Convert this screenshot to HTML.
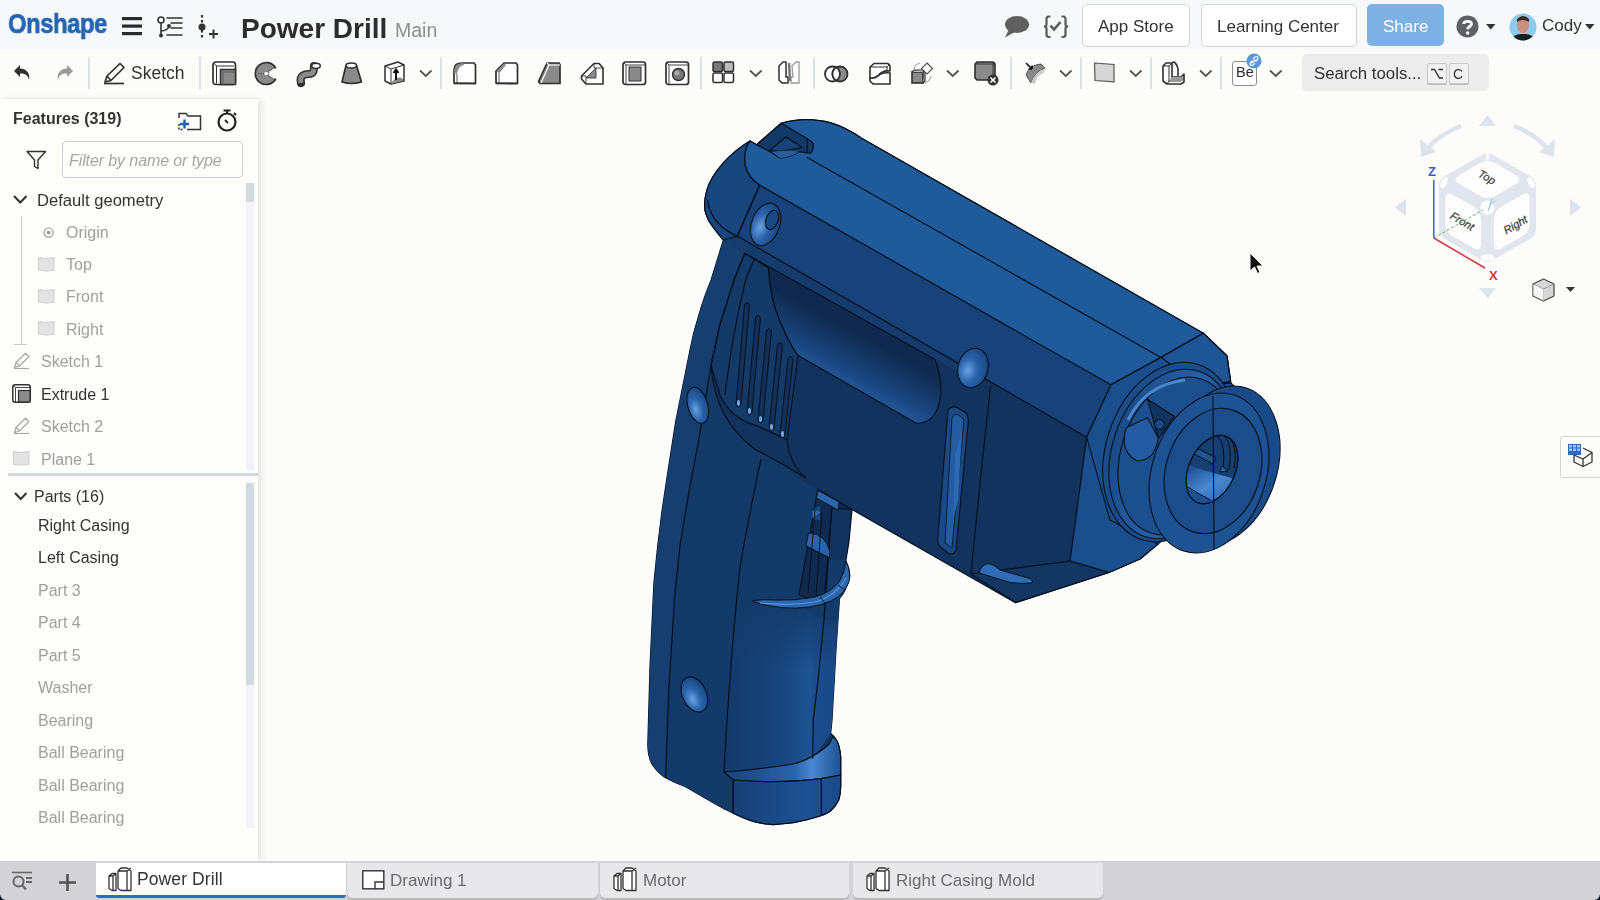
<!DOCTYPE html>
<html><head><meta charset="utf-8">
<style>
*{box-sizing:border-box;margin:0;padding:0}
html,body{width:1600px;height:900px;overflow:hidden;background:#fcfcfa;font-family:"Liberation Sans",sans-serif;color:#333;-webkit-font-smoothing:antialiased}
.a{position:absolute}
.t{position:absolute;white-space:nowrap;line-height:1;will-change:transform}
#topbar{position:absolute;left:0;top:0;width:1600px;height:50px;background:#f7f8fa}
#toolbar{position:absolute;left:0;top:50px;width:1600px;height:48px;background:#fcfcfb}
#panel{position:absolute;left:0;top:99px;width:258px;height:763px;background:#fdfdfc;box-shadow:5px 0 7px -1px rgba(20,20,60,0.09),0 -1px 2px rgba(0,0,0,0.06)}
#tabs{position:absolute;left:0;top:861px;width:1600px;height:39px;background:#d3d3d5}
.sep{position:absolute;top:57px;width:2px;height:32px;background:#dce1e6}
.btn{position:absolute;top:4px;height:43px;border:1px solid #d2d2d2;border-radius:5px;background:#fff}
.row{position:absolute;font-size:16.5px;white-space:nowrap;line-height:1}
.g{color:#a0a0a0}
.d{color:#333}
.tab{position:absolute;top:863px;height:35px;background:#e8e8ea;border-radius:0 0 5px 5px;box-shadow:0 1px 1px rgba(0,0,0,0.12)}
.tab .t{font-size:17px;color:#6b6b6b;top:11px}
svg{position:absolute;overflow:visible}
.ic{stroke:#333;stroke-width:1.6;fill:none;stroke-linejoin:round;stroke-linecap:round}
</style></head>
<body>
<svg style="left:0;top:0" width="1600" height="900" viewBox="0 0 1600 900">
<defs>
<linearGradient id="hg" x1="725" y1="0" x2="832" y2="0" gradientUnits="userSpaceOnUse">
<stop offset="0" stop-color="#143a6a"/><stop offset="0.5" stop-color="#18447c"/><stop offset="0.8" stop-color="#1e5392"/><stop offset="0.83" stop-color="#1b4d8c"/><stop offset="1" stop-color="#1a4a88"/>
</linearGradient>
<linearGradient id="hfade" x1="0" y1="600" x2="0" y2="670" gradientUnits="userSpaceOnUse">
<stop offset="0" stop-color="#143a69" stop-opacity="1"/><stop offset="1" stop-color="#143a69" stop-opacity="0"/>
</linearGradient>
<linearGradient id="og" x1="815" y1="395" x2="850" y2="330" gradientUnits="userSpaceOnUse">
<stop offset="0" stop-color="#3472bd"/><stop offset="0.5" stop-color="#1a4782"/><stop offset="1" stop-color="#0f2a4e"/>
</linearGradient>
<radialGradient id="holeg" cx="0.35" cy="0.6" r="0.7">
<stop offset="0" stop-color="#6aa2e2"/><stop offset="0.45" stop-color="#2a63aa"/><stop offset="1" stop-color="#17447c"/>
</radialGradient>
<linearGradient id="footg" x1="725" y1="0" x2="841" y2="0" gradientUnits="userSpaceOnUse">
<stop offset="0" stop-color="#163e72"/><stop offset="0.7" stop-color="#1d5192"/><stop offset="1" stop-color="#1a4a88"/>
</linearGradient>
<linearGradient id="filg" x1="725" y1="0" x2="841" y2="0" gradientUnits="userSpaceOnUse">
<stop offset="0" stop-color="#17427a"/><stop offset="0.6" stop-color="#2a64ab"/><stop offset="0.75" stop-color="#4a88d2"/><stop offset="1" stop-color="#1d5294"/>
</linearGradient>
<linearGradient id="chg" x1="1110" y1="0" x2="1240" y2="0" gradientUnits="userSpaceOnUse">
<stop offset="0" stop-color="#1a4a86"/><stop offset="0.5" stop-color="#2660a8"/><stop offset="1" stop-color="#1a4a86"/>
</linearGradient>
<linearGradient id="chole" x1="1190" y1="500" x2="1235" y2="440" gradientUnits="userSpaceOnUse">
<stop offset="0" stop-color="#1f5598"/><stop offset="0.4" stop-color="#4a88d0"/><stop offset="1" stop-color="#13386a"/>
</linearGradient>
<clipPath id="sil"><path d="M750 141 Q735 150 723.3 162.8 Q710 178 706.7 190.6 Q703 205 705.7 213.3 Q708 221 712.8 226.7 Q718 234 723.4 240 L711.1 280 Q703 300 698.7 315.6 Q693 333 689.8 351 L682.7 386.7 L675.6 422.2 L667.3 475.6 L662 511 L657.6 546.7 L654 582 L653.1 600 L650 666.7 L647.8 744.4 Q648 757 652.2 764.4 Q658 773 665.6 777.8 Q675 783 685.6 786.7 L713.3 802.7 Q724 809 733.3 813.3 Q745 819 753.3 821.3 Q763 824 773.3 824.7 L793.3 822.7 Q808 820 820 816 Q828 813 830.7 810.7 Q836 806 838.7 800 Q840.5 794 840.7 786.7 L840.7 757.3 Q840 750 838.7 745.3 Q836 740 833.3 736 L830.7 733.3 L832 720 L836 649.4 L838 620 L839.5 598.2 Q846 592 849.6 576.4 Q850 570 845.8 560.9 L848.9 542.2 L852 509.5 L1015.5 602.8 L1109 572.5 L1140 559 L1158 544 L1170 520 L1190 440 L1231 383 L1227 356 L1203.3 333.3 L862 138.5 Q845 127 830 122.7 Q820 120 806.7 119.7 Q795 119.5 781.3 123.3 L756.7 144.7 L750 141 Z"/></clipPath>
<linearGradient id="chole2" x1="1190" y1="470" x2="1215" y2="510" gradientUnits="userSpaceOnUse">
<stop offset="0" stop-color="#1f5598"/><stop offset="0.5" stop-color="#4a88d0"/><stop offset="1" stop-color="#2a64ad"/>
</linearGradient>
</defs>
<g stroke="#06101f" stroke-width="1.2" stroke-linejoin="round">
<!-- whole silhouette base -->
<path d="M750 141 Q735 150 723.3 162.8 Q710 178 706.7 190.6 Q703 205 705.7 213.3 Q708 221 712.8 226.7 Q718 234 723.4 240 L711.1 280 Q703 300 698.7 315.6 Q693 333 689.8 351 L682.7 386.7 L675.6 422.2 L667.3 475.6 L662 511 L657.6 546.7 L654 582 L653.1 600 L650 666.7 L647.8 744.4 Q648 757 652.2 764.4 Q658 773 665.6 777.8 Q675 783 685.6 786.7 L713.3 802.7 Q724 809 733.3 813.3 Q745 819 753.3 821.3 Q763 824 773.3 824.7 L793.3 822.7 Q808 820 820 816 Q828 813 830.7 810.7 Q836 806 838.7 800 Q840.5 794 840.7 786.7 L840.7 757.3 Q840 750 838.7 745.3 Q836 740 833.3 736 L830.7 733.3 L832 720 L836 649.4 L838 620 L839.5 598.2 Q846 592 849.6 576.4 Q850 570 845.8 560.9 L848.9 542.2 L852 509.5 L1015.5 602.8 L1109 572.5 L1140 559 L1158 544 L1170 520 L1190 440 L1231 383 L1227 356 L1203.3 333.3 L862 138.5 Q845 127 830 122.7 Q820 120 806.7 119.7 Q795 119.5 781.3 123.3 L756.7 144.7 L750 141 Z" fill="#12335d"/>
<!-- handle left strip -->
<path d="M723.4 240 L711.1 280 Q703 300 698.7 315.6 Q693 333 689.8 351 L682.7 386.7 L675.6 422.2 L667.3 475.6 L662 511 L657.6 546.7 L654 582 L653.1 600 L650 666.7 L647.8 744.4 Q648 757 652.2 764.4 Q658 773 665.6 777.8 L668.9 688.9 L674.4 600 L679.8 546.7 L688.7 493.3 L698.7 440 L711 365.3 L720 324.4 L734 280 L744.8 253.3 Z" fill="#163e6f" stroke="none"/>
<!-- handle middle -->
<path d="M711 365.3 L698.7 440 L688.7 493.3 L679.8 546.7 L674.4 600 L668.9 688.9 L665.6 777.8 Q675 783 685.6 786.7 L713.3 802.7 Q724 809 733.3 813.3 L733.3 780 L812.7 758.7 L830.7 733.3 L832 720 L836 649.4 L838 620 L839.5 598.2 L824 604 L831.8 508 L852 509.5 L806 483 Q780 462 754.8 449.2 Q715 420 711 365.3 Z" fill="#143a69" stroke="none"/>
<!-- band -->
<path d="M759.4 185 L1111 384.8 L1086.7 437.3 L900 329.3 L737.3 236 Q728 233 720 224 Z" fill="#17437a" stroke="none"/>
<!-- strip -->
<path d="M737.3 236 L900 329.3 L960 364 L960 373 L900 340 L744.8 253.3 L723.4 240 Z" fill="#153c6c" stroke="none"/>
<!-- top face -->
<path d="M750 141 L756.7 144.7 L781.3 123.3 Q795 119.5 806.7 119.7 Q820 120 830 122.7 Q845 127 862 138.5 L1203.3 333.3 L1161 357.4 L1111 384.8 L759.4 185 Q748 178 745 165 Q743 150 750 141 Z" fill="#1f5a9b"/>
<!-- rear cap face -->
<path d="M750 141 Q735 150 723.3 162.8 Q710 178 706.7 190.6 Q703 205 705.7 213.3 Q708 221 712.8 226.7 Q718 234 723.4 240 L737.3 236 L759.4 185 Q748 178 745 165 Q743 150 750 141 Z" fill="#18477f"/>
<path d="M707.4 200 Q710 214 717.2 222 Q725 231 737.3 236" fill="none"/>
<!-- slot on cap top -->
<path d="M756.7 144.7 L781.3 123.3 L807.3 138.7 Q814 142 813.5 146.5 Q813 151 810.7 153.3 L798.7 151.7 Q790 157.5 780 158 L769.3 151.3 Z" fill="#133966"/>
<path d="M769.3 150.7 L786 136.7 L802 147.3 Q792 150 780 151 Z" fill="#17427a"/>
<path d="M772 152 Q785 149 798.7 151.7 Q790 157.5 780 158 Z" fill="#2a5c9c" stroke="none"/>
<path d="M807.3 138.7 L807 153" fill="none"/>
<!-- front face -->
<path d="M1111 384.8 L1161 357.4 L1203.3 333.3 L1227 356 L1230.4 381.5 L1185 390 L1140 420 L1120 520 L1158 544 L1140 559 L1109 572.5 L1070 561 L1086.7 437.3 Z" fill="#1b4e8c"/>
<path d="M1161 357.4 L1203.3 333.3 L1227 356 L1230.4 381.5 L1200 386 Z" fill="#1e5596"/>
<!-- bottom face -->
<path d="M971 574 L1015.5 602.5 L1109 572.5 L1070 561 Z" fill="#133762"/>
</g>
<!-- chuck -->
<g stroke="#06101f" stroke-width="1.1">
<path d="M1111 384.8 L1161 357.4 L1200 386 L1231 383 L1240 392 L1175 530 L1158 544 L1110 520 L1086.7 437.3 Z" fill="#1b4e8c"/>
<ellipse cx="1170" cy="452" rx="64" ry="92" transform="rotate(18 1170 452)" fill="#1b4d8a"/>
<ellipse cx="1172" cy="454" rx="60" ry="87" transform="rotate(18 1172 454)" fill="url(#chg)"/>
<ellipse cx="1176" cy="456" rx="55" ry="81" transform="rotate(18 1176 456)" fill="#1c4f8d"/>
<path d="M1128 420 Q1145 385 1185 380" stroke="#4a86cc" stroke-width="3" fill="none"/>
<path d="M1147.5 399.3 L1174.4 416.5 L1158.5 438.5 Z" fill="#123460"/>
<circle cx="1159.5" cy="424.5" r="5" fill="#1a4a86"/>
<path d="M1147.5 417.7 L1158.5 438.5 Q1155 452 1151 455.6 Q1143 462 1136.5 460.5 Q1126 455 1124.2 443.3 Q1124 432 1126.7 427.5 Z" fill="#245ca3"/>
<ellipse cx="1221" cy="466" rx="56" ry="82" transform="rotate(18 1221 466)" fill="#1a4b88"/>
<ellipse cx="1209" cy="473" rx="57" ry="82" transform="rotate(18 1209 473)" fill="#1d5393"/>
<ellipse cx="1213" cy="471" rx="47" ry="64" transform="rotate(18 1213 471)" fill="#1b4d8b"/>
<clipPath id="holec"><ellipse cx="1212" cy="469.5" rx="23" ry="36" transform="rotate(25 1212 469.5)"/></clipPath>
<ellipse cx="1212" cy="469.5" rx="23" ry="36" transform="rotate(25 1212 469.5)" fill="#163f74"/>
<g clip-path="url(#holec)" stroke="none">
<path d="M1180 462 Q1200 470 1232 478 L1240 490 L1200 520 L1170 500 Z" fill="url(#chole2)"/>
<path d="M1180 485 L1212 500 L1205 515 L1175 500 Z" fill="#1d5192"/>
</g>
<g clip-path="url(#holec)" fill="none" stroke="#06101f" stroke-width="1">
<path d="M1197 448 L1216 458 L1213 464 L1194 454 Z" fill="#1f5596"/>
<path d="M1218 437 Q1226 445 1223 468 M1225 436 Q1233 446 1229 470 M1230 438 Q1238 450 1234 468"/>
<path d="M1222 466 L1228 471 L1220 472 Z" fill="#2c66ad"/>
<path d="M1184 485 L1210 500"/>
</g>
<ellipse cx="1212" cy="469.5" rx="23" ry="36" transform="rotate(25 1212 469.5)" fill="none"/>
<path d="M1213 396 L1214 550" fill="none"/>
</g>
<g stroke="#06101f" stroke-width="1.2" stroke-linejoin="round">
<!-- handle right cylinder below trigger -->
<path d="M740 567 Q790 600 824 620 L838 620 L836 649.4 L832 720 L830.7 733.3 L812.7 758.7 Q780 768 724 772 Q726 680 733 620 Z" fill="url(#hg)" stroke="none"/>
<path d="M720 560 L860 560 L860 700 L720 700 Z" fill="url(#hfade)" stroke="none" clip-path="url(#sil)"/>
<!-- foot fillet -->
<path d="M724 772 Q760 769.3 793.3 764 Q813 759 829.3 744 L833.3 736 Q838 741 838.7 745.3 Q840.5 752 840.7 757.3 L840.7 775 Q830 777 821.3 778.7 Q780 784 733.3 780 Z" fill="url(#filg)"/>
<!-- foot front -->
<path d="M733.3 780 Q780 784 821.3 778.7 L840.7 775 L840.7 786.7 Q840.5 794 838.7 800 Q836 806 830.7 810.7 Q828 813 820 816 Q808 820 793.3 822.7 L773.3 824.7 Q763 824 753.3 821.3 Q745 819 733.3 813.3 Z" fill="url(#footg)"/>
<!-- recessed oval -->
<path d="M768.4 266.5 Q770 300 781 324 Q790 345 798 355.6 L916.3 423.2 Q935 424 940 400 Q943 380 935 359.5 L744.8 253.3 Z" fill="url(#og)"/>
<!-- vent panel -->
<path d="M711 365.3 L720 324.4 L734 280 L744.8 253.3 L768.4 268 Q770 300 781 324 Q790 345 798 355.6 L787 439.5 L754.8 425 Q730 418 720 395 Z" fill="#143a68"/>
</g>
<!-- vent slots -->
<g fill="#11305a" stroke="#06101f" stroke-width="1">
<path d="M736 404 L744.5 305 Q747 300 749.5 305 L741 404 Q738.5 410 736 404Z"/>
<path d="M747 412 L755.5 318 Q758 313 760.5 318 L752 412 Q749.5 418 747 412Z"/>
<path d="M758 420 L766.5 331 Q769 326 771.5 331 L763 420 Q760.5 426 758 420Z"/>
<path d="M769 428 L777.5 345 Q780 340 782.5 345 L774 428 Q771.5 434 769 428Z"/>
<path d="M780 435 L788 359 Q790.5 354 793 359 L785 435 Q782.5 441 780 435Z"/>
</g>
<g fill="#6aa4e6" stroke="none">
<ellipse cx="738.5" cy="403" rx="1.6" ry="3"/>
<ellipse cx="749.5" cy="411" rx="1.6" ry="3"/>
<ellipse cx="760.5" cy="419" rx="1.6" ry="3"/>
<ellipse cx="771.5" cy="427" rx="1.6" ry="3"/>
<ellipse cx="782.5" cy="434" rx="1.6" ry="3"/>
</g>
<g stroke="#06101f" stroke-width="1.2" fill="none">
<path d="M806.7 157.2 L1161 357.4"/>
<path d="M744.8 253.3 L734 280 L720 324.4 L711 365.3 L698.7 440 L688.7 493.3 L679.8 546.7 L674.4 600 L668.9 688.9 L665.6 777.8"/>
<path d="M711 365.3 Q715 420 754.8 449.2 Q780 462 806 478"/>
<path d="M787 439.5 Q790 465 806 478"/>
<path d="M754.6 257.8 L745.7 280 Q738 310 733 340 Q728 370 725 395"/>
<path d="M761 459 Q750 510 740 567 Q730 660 724 772"/>
<path d="M990.7 385.3 Q980 480 971 574"/>
<path d="M831.8 508 L824 620 L818 680 L813.3 720 L812.7 758.7"/>
<path d="M733.3 780 L733.3 813.3 M821.3 778.7 L821.3 814.7"/>
<path d="M760 185 L737.3 236"/>
<path d="M737.3 236 L1086.7 437.3"/>
</g>
<!-- trigger opening -->
<path d="M817.8 489.3 L852 509.5 L831.8 508 L824 604 L799 595 Z" fill="#0f2b50" stroke="#06101f" stroke-width="1.1"/>
<path d="M818 490.5 L839 502 L838 510 L816.5 498 Z" fill="#2c66ad" stroke="#06101f" stroke-width="0.8"/>
<path d="M815 508 L820 506 L820 520 L813 519 Z" fill="#1a4a86" stroke="none"/>
<path d="M813 510 L821 512 L812 518 Z" fill="#2f6cb5" stroke="none"/>
<path d="M808.5 533 Q826 534 830 552 L829 558 L806 546 Z" fill="#2a63aa" stroke="#06101f" stroke-width="0.8"/>
<path d="M806 546 L830 558" stroke="#06101f" stroke-width="1" fill="none"/>
<path d="M815 510 L808 594 M822 512 L816 596" stroke="#06101f" stroke-width="0.9" fill="none"/>
<!-- long slot -->
<path d="M948 410 Q952 405 958 408 L966 413 Q969 417 968 424 L956 550 Q953 556 948 553 L939 546 Q937 542 938 536 Z" fill="#1a4a86" stroke="#06101f" stroke-width="1.1"/>
<path d="M952 418 Q955 412 960 416 L964 420 L952 548 L945 543 Z" fill="#245ca2" stroke="#06101f" stroke-width="0.8"/>
<path d="M955 455 L962 430 L958 500 L953 520 Z" fill="#2e6ab2" stroke="none"/>
<!-- bottom slot -->
<path d="M979 573 Q981 565 988 563.5 Q994 564 1000 570 L1030 578.5 Q1034 581 1032 583 Q1020 584 1010 582.5 Z" fill="#2f6cb5" stroke="#06101f" stroke-width="1"/>
<!-- holes -->
<g stroke="#06101f" stroke-width="1.1">
<ellipse cx="765.6" cy="224.4" rx="14" ry="22" transform="rotate(20 765.6 224.4)" fill="url(#holeg)"/>
<ellipse cx="772" cy="220" rx="6" ry="10" transform="rotate(20 772 220)" fill="#1a4a86"/>
<ellipse cx="973" cy="368" rx="15" ry="20" transform="rotate(15 973 368)" fill="url(#holeg)"/>
<ellipse cx="697.8" cy="405.3" rx="10" ry="18.5" transform="rotate(-16 697.8 405.3)" fill="url(#holeg)"/>
<ellipse cx="694.4" cy="694.4" rx="12" ry="18.5" transform="rotate(-25 694.4 694.4)" fill="url(#holeg)"/>
</g>
<!-- trigger ring -->
<path d="M752.4 601.3 Q780 611 810 607 Q834 603 843 592 Q851 582 849.6 574 Q849 566 845.8 560.9 Q845 572 839 582 Q830 593 815 597 Q795 601 775 600 Q760 599 752.4 601.3 Z" fill="#2c66ad" stroke="#06101f" stroke-width="1"/>
<path d="M760 603 Q790 606 815 602 Q836 596 846 578" stroke="#5a96dc" stroke-width="1.2" fill="none"/>
<path d="M820 597 L826 604 M838 585 L845 590" stroke="#06101f" stroke-width="0.9" fill="none"/>
<!-- cursor -->
<path d="M1250 253 L1250 271 L1254.5 267 L1257.5 273.5 L1260 272.3 L1257 266 L1263 266 Z" fill="#111" stroke="#fff" stroke-width="1"/>
</svg>

<div id="topbar">
  <div class="t" style="left:7.5px;top:10px;font-size:28px;font-weight:bold;color:#2466b3;transform:scaleX(0.85);transform-origin:0 0;letter-spacing:-0.5px;-webkit-text-stroke:0.7px #2466b3">Onshape</div>
  <svg style="left:122px;top:17px" width="21" height="19"><rect x="0" y="0" width="20" height="3.2" fill="#2b2b2b"/><rect x="0" y="7.5" width="20" height="3.2" fill="#2b2b2b"/><rect x="0" y="15" width="20" height="3.2" fill="#2b2b2b"/></svg>
  <svg style="left:157px;top:16px" width="26" height="22" class="ic"><circle cx="4" cy="4" r="3" /><path d="M4 7 V19 M4 15 C8 15 12 13 12 10"/><circle cx="4" cy="19.5" r="1.2" fill="#333"/><circle cx="12" cy="10" r="1.2" fill="#333"/><path d="M10 2 H25 M14 7 H25 M14 12 H25 M10 19 H25"/></svg>
  <svg style="left:197px;top:15px" width="22" height="24"><path d="M5 0 V24" stroke="#333" stroke-width="2.2" stroke-dasharray="2.5 2.5"/><circle cx="5" cy="12" r="3.5" fill="#333"/><path d="M12 19 H21 M16.5 14.5 V23.5" stroke="#333" stroke-width="2"/></svg>
  <div class="t" style="left:241px;top:14.5px;font-size:28px;font-weight:bold;color:#2d2d30">Power Drill</div>
  <div class="t" style="left:395px;top:21px;font-size:19.5px;color:#8e8e8e">Main</div>
  <svg style="left:1004px;top:15px" width="26" height="23"><ellipse cx="13" cy="9.5" rx="12" ry="8.5" fill="#606060"/><path d="M5 14 L1 22.5 L11 17 Z" fill="#606060"/></svg>
  <svg style="left:1043px;top:15px" width="28" height="24"><path d="M7.5 1.5 H6 Q3.5 1.5 3.5 4 V9.5 Q3.5 11.5 1 11.5 Q3.5 11.5 3.5 13.5 V19.5 Q3.5 22 6 22 H7.5" stroke="#5a5a5a" stroke-width="2.2" fill="none"/><path d="M18.5 1.5 H20 Q22.5 1.5 22.5 4 V9.5 Q22.5 11.5 25 11.5 Q22.5 11.5 22.5 13.5 V19.5 Q22.5 22 20 22 H18.5" stroke="#5a5a5a" stroke-width="2.2" fill="none"/><path d="M7.5 10.5 L11 14.5 L17.5 7" stroke="#5a5a5a" stroke-width="2.6" fill="none"/></svg>
<div class="btn" style="left:1082px;width:108px"></div>
  <div class="t" style="left:1098px;top:18px;font-size:17px;color:#333">App Store</div>
  <div class="btn" style="left:1201px;width:156px"></div>
  <div class="t" style="left:1217px;top:18px;font-size:17px;color:#333">Learning Center</div>
  <div class="a" style="left:1367px;top:4px;width:77px;height:42px;border-radius:5px;background:#7db1e3"></div>
  <div class="t" style="left:1383px;top:18px;font-size:17px;color:#fff">Share</div>
  <svg style="left:1456px;top:15px" width="24" height="24"><circle cx="11.5" cy="11.5" r="11" fill="#5e6266"/><path d="M7.8 9 C7.8 5.5 15.5 5.5 15.5 9 C15.5 11.5 11.7 11.5 11.7 14.2" stroke="#fff" stroke-width="2.8" fill="none"/><circle cx="11.7" cy="18" r="1.7" fill="#fff"/></svg>
  <svg style="left:1486px;top:24px" width="10" height="6"><path d="M0 0 H9.5 L4.75 5.5 Z" fill="#333"/></svg>
  <svg style="left:1509px;top:13px" width="28" height="28"><defs><clipPath id="av"><circle cx="14" cy="14" r="13.5"/></clipPath></defs><g clip-path="url(#av)"><rect width="28" height="28" fill="#8ccbf0"/><ellipse cx="14" cy="12" rx="6" ry="8" fill="#c89080"/><path d="M8 6 Q14 0 20 6 L20 9 Q14 5 8 9Z" fill="#3a2a22"/><path d="M2 28 Q4 20 14 21 Q24 20 26 28Z" fill="#1d1d1d"/></g></svg>
  <div class="t" style="left:1542px;top:17px;font-size:17px;color:#333">Cody</div>
  <svg style="left:1585px;top:24px" width="10" height="6"><path d="M0 0 H9.5 L4.75 5.5 Z" fill="#333"/></svg>
</div>
<div id="toolbar">
<svg style="left:13px;top:13px" width="19" height="19"><path d="M7 2 L1 8 L7 14 L7 10.5 C12 10 15 12 16 17 C17.5 10 13 5.5 7 5.5 Z" fill="#2f2f2f"/></svg>
<svg style="left:56px;top:13px" width="19" height="19"><path d="M11 2 L17 8 L11 14 L11 10.5 C6 10 3 12 2 17 C0.5 10 5 5.5 11 5.5 Z" fill="#9a9a9a"/></svg>
<div class="sep" style="left:88px;top:7px"></div>
<svg style="left:102px;top:12px" width="24" height="24"><path d="M3 20 L5 14 L18 1.5 L22 5.5 L9 18.5 Z M5 14 L9 18.5" stroke="#2f2f2f" stroke-width="1.7" fill="none" stroke-linejoin="round"/><path d="M2 21.5 H22" stroke="#2f2f2f" stroke-width="1.7"/></svg>
<div class="t" style="left:131px;top:15px;font-size:17.5px;color:#333">Sketch</div>
<div class="sep" style="left:199px;top:7px"></div>
<!-- extrude -->
<svg style="left:212px;top:11px" width="25" height="25"><rect x="1" y="1" width="22.5" height="22.5" rx="3" fill="#fff" stroke="#2f2f2f" stroke-width="1.7"/><path d="M1.5 2 L4.5 5 H22 M4.5 5 V22.5" stroke="#2f2f2f" stroke-width="1" fill="none"/><rect x="8.5" y="8.5" width="15" height="15" fill="#8a8a8a" stroke="#2f2f2f" stroke-width="1.5"/><path d="M8.5 8.5 L11 11 H23.5 M11 11 V23.5" stroke="#555" stroke-width="0.9" fill="none"/></svg>
<!-- revolve -->
<svg style="left:255px;top:11px" width="23" height="25"><path d="M20.5 6.5 A11 11 0 1 0 20.5 18.5 L13.5 14 Q12.5 12.5 13.5 11 Z" fill="#8a8a8a" stroke="#2f2f2f" stroke-width="1.7" stroke-linejoin="round"/><path d="M13.8 11.2 L19.5 7.5 M13.8 13.8 L19.5 17.5" stroke="#fff" stroke-width="1.3"/><ellipse cx="11.5" cy="12.5" rx="2.3" ry="1.5" fill="#fff"/><path d="M3 12.5 H9" stroke="#555" stroke-width="0.8" stroke-dasharray="1.5 1"/></svg>
<!-- sweep -->
<svg style="left:297px;top:12px" width="25" height="24"><path d="M4 21 C2 13 8 12 12 12 C17 12 17 8 17 4" stroke="#2f2f2f" stroke-width="8.2" fill="none" stroke-linecap="round"/><path d="M4 21 C2 13 8 12 12 12 C17 12 17 8 17 4" stroke="#8a8a8a" stroke-width="5" fill="none" stroke-linecap="butt"/><ellipse cx="19" cy="3.8" rx="4.3" ry="2.6" fill="#fff" stroke="#2f2f2f" stroke-width="1.5"/></svg>
<!-- loft -->
<svg style="left:340px;top:12px" width="24" height="24"><path d="M6 3.5 L2 20 Q11 23 21.5 20 L16.5 3.5 Z" fill="#8a8a8a" stroke="#2f2f2f" stroke-width="1.7" stroke-linejoin="round"/><ellipse cx="11.3" cy="3.5" rx="5.3" ry="2.5" fill="#fff" stroke="#2f2f2f" stroke-width="1.5"/></svg>
<!-- thicken -->
<svg style="left:383px;top:11px" width="23" height="25"><path d="M2 5 L15 1 L21 4 L21 20 L8 23 L2 20 Z" fill="#fff" stroke="#2f2f2f" stroke-width="1.5" stroke-linejoin="round"/><path d="M2 5 L8 8 L21 4 M8 8 V23" stroke="#2f2f2f" stroke-width="1" fill="none"/><path d="M9 21 Q15 14 20 18 V20 L8 23Z" fill="#8a8a8a"/><path d="M13 19 V9 M10.5 12 L13 8.5 L15.5 12" stroke="#111" stroke-width="2" fill="none"/></svg>
<svg style="left:419px;top:19px" width="14" height="9"><path d="M1 1.5 L6.75 7 L12.5 1.5" stroke="#555" stroke-width="1.8" fill="none"/></svg>
<div class="sep" style="left:440px;top:7px"></div>
<!-- fillet -->
<svg style="left:452px;top:11px" width="25" height="25"><path d="M2 22 V9 Q2 2 10 2 H22 L23.5 4 V22.5 Z" fill="#fff" stroke="#2f2f2f" stroke-width="1.7" stroke-linejoin="round"/><path d="M2 22.5 H23.5" stroke="#2f2f2f" stroke-width="1.7"/><path d="M2 12 Q2 2 11 2 L12 4 Q6 5 5 13 Z" fill="#8a8a8a"/><path d="M5 13 V22" stroke="#2f2f2f" stroke-width="0.8"/></svg>
<!-- chamfer -->
<svg style="left:494px;top:11px" width="25" height="25"><path d="M2 22 V10 L10 2 H22 L23.5 4 V22.5 Z" fill="#fff" stroke="#2f2f2f" stroke-width="1.7" stroke-linejoin="round"/><path d="M2 22.5 H23.5" stroke="#2f2f2f" stroke-width="1.7"/><path d="M2.5 10 L10 2.5 L12 4 L5 12.5 Z" fill="#8a8a8a"/><path d="M5 12.5 V22" stroke="#2f2f2f" stroke-width="0.8"/></svg>
<!-- draft -->
<svg style="left:537px;top:11px" width="25" height="25"><path d="M1.5 20.5 L10 2 H22 L23 4 V22.5 L3 22.5 Z" fill="#8a8a8a" stroke="#2f2f2f" stroke-width="1.7" stroke-linejoin="round"/><path d="M10 2 L12 4 H23 M12 4 L4 22" stroke="#fff" stroke-width="1.2" fill="none"/></svg>
<!-- rib -->
<svg style="left:580px;top:12px" width="24" height="24"><path d="M1.5 14 L14 1.5 H19 L23 6 V22 H6 L1.5 17 Z" fill="#fff" stroke="#2f2f2f" stroke-width="1.6" stroke-linejoin="round"/><path d="M6 16 L16 6 V16 Z" fill="#8a8a8a" stroke="#2f2f2f" stroke-width="0.8"/><path d="M1.5 14 H6 V22 M14 1.5 V6 H23" stroke="#2f2f2f" stroke-width="0.9" fill="none"/></svg>
<!-- shell -->
<svg style="left:622px;top:11px" width="25" height="25"><rect x="1" y="1" width="22.5" height="22.5" rx="2.5" fill="#fff" stroke="#2f2f2f" stroke-width="1.7"/><path d="M1.5 1.5 L4 4 H23 M4 4 V23" stroke="#2f2f2f" stroke-width="0.9" fill="none"/><rect x="7" y="6" width="12" height="14" fill="#8a8a8a" stroke="#2f2f2f" stroke-width="1"/></svg>
<!-- hole -->
<svg style="left:665px;top:11px" width="25" height="25"><rect x="1" y="1" width="22.5" height="22.5" rx="2.5" fill="#fff" stroke="#2f2f2f" stroke-width="1.7"/><path d="M1.5 1.5 L4 4 H23 M4 4 V23" stroke="#2f2f2f" stroke-width="0.9" fill="none"/><circle cx="13.5" cy="13.5" r="6" fill="#777" stroke="#2f2f2f" stroke-width="1.4"/><circle cx="12" cy="12" r="2.5" fill="#aaa"/></svg>
<div class="sep" style="left:700px;top:7px"></div>
<!-- pattern -->
<svg style="left:712px;top:11px" width="24" height="24"><g stroke="#2f2f2f" stroke-width="1.5"><rect x="1" y="1" width="9.5" height="9.5" rx="1.5" fill="#777"/><rect x="12" y="1" width="9.5" height="9.5" rx="1.5" fill="#bbb"/><rect x="1" y="12" width="9.5" height="9.5" rx="1.5" fill="#fff"/><rect x="12" y="12" width="9.5" height="9.5" rx="1.5" fill="#fff"/></g></svg>
<svg style="left:749px;top:19px" width="14" height="9"><path d="M1 1.5 L6.75 7 L12.5 1.5" stroke="#555" stroke-width="1.8" fill="none"/></svg>
<!-- mirror -->
<svg style="left:777px;top:11px" width="25" height="25"><path d="M2 5 L6 1 H9 V16 H11 V22 H5 L2 19 Z" fill="#fff" stroke="#2f2f2f" stroke-width="1.5" stroke-linejoin="round"/><path d="M15 5 L19 1 H22 V22 H14 V16 H16 Z" fill="#fff" stroke="#999" stroke-width="1.3"/><path d="M12 2 L13 20" stroke="#777" stroke-width="2.5"/></svg>
<div class="sep" style="left:813px;top:7px"></div>
<!-- boolean -->
<svg style="left:824px;top:12px" width="25" height="24"><circle cx="8.5" cy="12" r="7.5" fill="#fff" stroke="#2f2f2f" stroke-width="1.8"/><circle cx="16" cy="12" r="7.5" fill="#8a8a8a" stroke="#2f2f2f" stroke-width="1.8"/><path d="M12.2 5.5 A7.5 7.5 0 0 1 12.2 18.5 A7.5 7.5 0 0 1 12.2 5.5Z" fill="#fff" stroke="#2f2f2f" stroke-width="1.8"/></svg>
<!-- split -->
<svg style="left:868px;top:12px" width="24" height="24"><path d="M2 5 L6 1.5 H20 L22 4 V9 Q14 8 10 14 Q6 17 2 16 Z" fill="#fff" stroke="#2f2f2f" stroke-width="1.6" stroke-linejoin="round"/><path d="M2 5 H19 L22 2 M19 5 V9" stroke="#2f2f2f" stroke-width="1" fill="none"/><path d="M2 16 Q6 17 10 14 Q14 10 22 11 V22 H5 L2 19Z" fill="#fff" stroke="#2f2f2f" stroke-width="1.6"/></svg>
<!-- transform -->
<svg style="left:910px;top:11px" width="25" height="25"><rect x="2" y="11" width="11" height="11" fill="#8a8a8a" stroke="#2f2f2f" stroke-width="1.6"/><path d="M2 11 L4 9 H15 L13 11 M15 9 V20 L13 22" stroke="#2f2f2f" stroke-width="1.2" fill="#bbb"/><path d="M17 2 L22.5 7.5 L17 13 L11.5 7.5Z" fill="#fff" stroke="#555" stroke-width="1.2"/><path d="M4 8 Q5 3 10 2 M21 15 Q20 20 15 22" stroke="#aaa" stroke-width="1.2" fill="none"/></svg>
<svg style="left:946px;top:19px" width="14" height="9"><path d="M1 1.5 L6.75 7 L12.5 1.5" stroke="#555" stroke-width="1.8" fill="none"/></svg>
<!-- delete part -->
<svg style="left:974px;top:11px" width="25" height="25"><path d="M1 3 L3 1 H19 L21 3 V19 H3 L1 17 Z" fill="#8a8a8a" stroke="#2f2f2f" stroke-width="1.6"/><path d="M1 3 H19 V19 M19 3 L21 1" stroke="#2f2f2f" stroke-width="0.9" fill="none"/><circle cx="19" cy="19" r="5.5" fill="#333"/><path d="M16.5 16.5 L21.5 21.5 M21.5 16.5 L16.5 21.5" stroke="#fff" stroke-width="1.6"/></svg>
<div class="sep" style="left:1010px;top:7px"></div>
<!-- surface -->
<svg style="left:1023px;top:11px" width="24" height="25"><path d="M3 14 Q6 4 18 3 L22 7 Q12 10 8 22 Z" fill="#8a8a8a" stroke="#555" stroke-width="1"/><path d="M8 22 Q12 11 22 8 L21 12 Q14 14 12 23" fill="#ccc"/><path d="M3 2 L9 8 M9 8 L9 4.5 M9 8 L5.5 8" stroke="#111" stroke-width="1.6" fill="none"/></svg>
<svg style="left:1059px;top:19px" width="14" height="9"><path d="M1 1.5 L6.75 7 L12.5 1.5" stroke="#555" stroke-width="1.8" fill="none"/></svg>
<div class="sep" style="left:1080px;top:7px"></div>
<!-- plane -->
<svg style="left:1094px;top:12px" width="21" height="21"><path d="M0.5 1 L20 2.5 V19.8 L1 18.5 Z" fill="#d6d6d6" stroke="#555" stroke-width="1.2"/></svg>
<svg style="left:1129px;top:19px" width="14" height="9"><path d="M1 1.5 L6.75 7 L12.5 1.5" stroke="#555" stroke-width="1.8" fill="none"/></svg>
<div class="sep" style="left:1150px;top:7px"></div>
<!-- sheet metal -->
<svg style="left:1162px;top:11px" width="24" height="25"><path d="M1 5 L4 2 H10 V16 H19 L22 13 V21 L19 23 H5 L1 20 Z" fill="#fff" stroke="#2f2f2f" stroke-width="1.6" stroke-linejoin="round"/><path d="M1 5 H7 L10 2 M7 5 V20 L5 23 M7 20 H19 L22 16" stroke="#2f2f2f" stroke-width="1" fill="none"/><path d="M10 1.5 L12 1 Q15 3 16 8 V15" stroke="#2f2f2f" stroke-width="1.6" fill="none"/><path d="M9 16 H20 L21 20 H8Z" fill="#999"/></svg>
<svg style="left:1199px;top:19px" width="14" height="9"><path d="M1 1.5 L6.75 7 L12.5 1.5" stroke="#555" stroke-width="1.8" fill="none"/></svg>
<div class="sep" style="left:1220px;top:7px"></div>
<!-- Be -->
<div class="a" style="left:1232px;top:10.5px;width:25px;height:25px;border:1.5px solid #8f8f8f;border-radius:3px;background:#fff"></div>
<div class="t" style="left:1236px;top:15px;font-size:14.5px;color:#2a2a2a">Be</div>
<svg style="left:1246px;top:3px" width="16" height="16"><circle cx="8" cy="8" r="7.5" fill="#5a98dc"/><path d="M4.5 10.5 L6.5 8.5 M7 6 L9 4 Q10.5 3 11.5 4 Q12.5 5 11.5 6.5 L9.5 8.5 M9 10 L7 12 Q5.5 13 4.5 12 Q3.5 11 4.5 9.5 L6.5 7.5 M6.5 9.5 L9.5 6.5" stroke="#fff" stroke-width="1.2" fill="none"/></svg>
<svg style="left:1269px;top:19px" width="14" height="9"><path d="M1 1.5 L6.75 7 L12.5 1.5" stroke="#555" stroke-width="1.8" fill="none"/></svg>
<!-- search -->
<div class="a" style="left:1302px;top:4px;width:187px;height:37px;border-radius:5px;background:#ececec"></div>
<div class="t" style="left:1314px;top:16px;font-size:16.8px;color:#333">Search tools...</div>
<div class="a" style="left:1427px;top:13px;width:20px;height:21px;border:1px solid #c8c8c8;border-radius:2px;background:#f2f2f2;box-shadow:0 1px 0 #bbb"></div>
<svg style="left:1430px;top:18px" width="14" height="11"><path d="M1 1.5 H4.5 L9.5 10 H13 M8.5 1.5 H13" stroke="#333" stroke-width="1.4" fill="none"/></svg>
<div class="a" style="left:1449px;top:13px;width:20px;height:21px;border:1px solid #c8c8c8;border-radius:2px;background:#f2f2f2;box-shadow:0 1px 0 #bbb"></div>
<div class="t" style="left:1453px;top:17px;font-size:14px;color:#333">C</div>

</div>
<div id="panel"><div class="a" style="left:0;top:-1px;width:258px;height:764px">

<div class="t" style="left:13px;top:12.5px;font-size:16px;font-weight:bold;color:#333">Features (319)</div>
<svg style="left:178px;top:14px" width="24" height="19"><path d="M1 6 V1.5 H8 L10 4 H22.5 V17.5 H9" stroke="#333" stroke-width="1.5" fill="none"/><path d="M1 12 V17.5 H5" stroke="#333" stroke-width="1.5" fill="none" stroke-dasharray="2 1.5"/><path d="M6.5 7.5 V16.5 M2 12 H11" stroke="#1d62b8" stroke-width="2.4"/></svg>
<svg style="left:216px;top:11px" width="23" height="23"><circle cx="11" cy="13" r="8.5" stroke="#222" stroke-width="2.2" fill="none"/><path d="M7.5 1.5 H14.5 M11 1.5 V4.5 M18 4 L20 6" stroke="#222" stroke-width="2" fill="none"/><path d="M9 11 L12 14" stroke="#222" stroke-width="1.8"/></svg>
<svg style="left:26px;top:52px" width="21" height="20"><path d="M1 1.5 H19.5 L12 10 V18.5 L8.5 16.5 V10 Z" stroke="#333" stroke-width="1.4" fill="none" stroke-linejoin="round"/></svg>
<div class="a" style="left:62px;top:43px;width:181px;height:37px;border:1px solid #cdd0d4;border-radius:4px;background:#fdfdfc"></div>
<div class="t" style="left:69px;top:55px;font-size:16px;font-style:italic;color:#a6a6a6;letter-spacing:-0.1px">Filter by name or type</div>
<div class="a" style="left:246px;top:85px;width:8px;height:287px;background:#f2f3f7"></div>
<div class="a" style="left:246px;top:85px;width:8px;height:19px;background:#d3d9e0"></div>
<svg style="left:13px;top:97px" width="15" height="9"><path d="M1 1 L7.25 7.5 L13.5 1" stroke="#333" stroke-width="2" fill="none"/></svg>
<div class="t" style="left:37px;top:94.5px;font-size:16.6px;color:#333">Default geometry</div>
<div class="a" style="left:20.5px;top:118px;width:1px;height:129px;background:#c8c8c8"></div>
<div class="a" style="left:14px;top:246px;width:13px;height:1px;background:#c8c8c8"></div>
<svg style="left:43px;top:128.5px" width="12" height="12"><circle cx="5.6" cy="5.6" r="4.6" stroke="#999" stroke-width="1.2" fill="none"/><circle cx="5.6" cy="5.6" r="1.9" fill="#999"/></svg>
<div class="t g" style="left:66px;top:126.6px;font-size:16px">Origin</div>
<svg style="left:38px;top:158.5px" width="17" height="15"><path d="M0.5 0.5 L8 1.5 L16 0.5 V13.5 L8 14 L0.5 13.5 Z" fill="#e3e3e3" stroke="#d0d0d0" stroke-width="1"/></svg>
<div class="t g" style="left:66px;top:159.0px;font-size:16px">Top</div>
<svg style="left:38px;top:190.9px" width="17" height="15"><path d="M0.5 0.5 L8 1.5 L16 0.5 V13.5 L8 14 L0.5 13.5 Z" fill="#e3e3e3" stroke="#d0d0d0" stroke-width="1"/></svg>
<div class="t g" style="left:66px;top:191.4px;font-size:16px">Front</div>
<svg style="left:38px;top:223.3px" width="17" height="15"><path d="M0.5 0.5 L8 1.5 L16 0.5 V13.5 L8 14 L0.5 13.5 Z" fill="#e3e3e3" stroke="#d0d0d0" stroke-width="1"/></svg>
<div class="t g" style="left:66px;top:223.8px;font-size:16px">Right</div>
<svg style="left:13px;top:254.3px" width="18" height="18"><path d="M1.5 15.5 L3 10.5 L12.5 1.2 L16 4.5 L6.5 14 Z M3 10.5 L6.5 14" stroke="#a8a8a8" stroke-width="1.2" fill="none" stroke-linejoin="round"/><path d="M1 16.5 H16" stroke="#a8a8a8" stroke-width="1.2"/></svg>
<div class="t g" style="left:41px;top:256.3px;font-size:16px">Sketch 1</div>
<svg style="left:12px;top:285.8px" width="20" height="20"><rect x="0.8" y="0.8" width="17.5" height="17.5" rx="2.5" fill="#fff" stroke="#333" stroke-width="1.5"/><path d="M1.2 1.5 L3.5 3.5 H18 M3.5 3.5 V18" stroke="#333" stroke-width="0.9" fill="none"/><rect x="6.5" y="6.5" width="11.5" height="11.5" fill="#8a8a8a" stroke="#333" stroke-width="1.2"/></svg>
<div class="t d" style="left:41px;top:288.8px;font-size:16px">Extrude 1</div>
<svg style="left:13px;top:319px" width="18" height="18"><path d="M1.5 15.5 L3 10.5 L12.5 1.2 L16 4.5 L6.5 14 Z M3 10.5 L6.5 14" stroke="#a8a8a8" stroke-width="1.2" fill="none" stroke-linejoin="round"/><path d="M1 16.5 H16" stroke="#a8a8a8" stroke-width="1.2"/></svg>
<div class="t g" style="left:41px;top:321.0px;font-size:16px">Sketch 2</div>
<svg style="left:13px;top:352.5px" width="17" height="15"><path d="M0.5 0.5 L8 1.5 L16 0.5 V13.5 L8 14 L0.5 13.5 Z" fill="#e3e3e3" stroke="#d0d0d0" stroke-width="1"/></svg>
<div class="t g" style="left:41px;top:353.5px;font-size:16px">Plane 1</div>
<div class="a" style="left:8px;top:375px;width:250px;height:3px;background:#d0d6dd"></div>
<div class="a" style="left:246px;top:385px;width:8px;height:345px;background:#f2f3f7"></div>
<div class="a" style="left:246px;top:385px;width:8px;height:202px;background:#d3d9e0"></div>
<svg style="left:14px;top:394px" width="14" height="9"><path d="M1 1 L6.75 7 L12.5 1" stroke="#333" stroke-width="2" fill="none"/></svg>
<div class="t d" style="left:33.5px;top:390.9px;font-size:16px">Parts (16)</div>
<div class="t d" style="left:37.5px;top:419.8px;font-size:16px">Right Casing</div>
<div class="t d" style="left:37.5px;top:452.3px;font-size:16px">Left Casing</div>
<div class="t g" style="left:37.5px;top:484.8px;font-size:16px">Part 3</div>
<div class="t g" style="left:37.5px;top:517.3px;font-size:16px">Part 4</div>
<div class="t g" style="left:37.5px;top:549.8px;font-size:16px">Part 5</div>
<div class="t g" style="left:37.5px;top:582.3px;font-size:16px">Washer</div>
<div class="t g" style="left:37.5px;top:614.8px;font-size:16px">Bearing</div>
<div class="t g" style="left:37.5px;top:647.3px;font-size:16px">Ball Bearing</div>
<div class="t g" style="left:37.5px;top:679.8px;font-size:16px">Ball Bearing</div>
<div class="t g" style="left:37.5px;top:712.3px;font-size:16px">Ball Bearing</div>

</div></div>
<div id="tabs">

<svg style="left:11px;top:10px" width="23" height="21"><path d="M1 1.5 H21" stroke="#666" stroke-width="1.6"/><circle cx="7.5" cy="10.5" r="5" stroke="#666" stroke-width="2" fill="none"/><path d="M11 14 L15 18.5" stroke="#666" stroke-width="2.2"/><path d="M15 7 H21 M15 11 H21" stroke="#666" stroke-width="2"/></svg>
<svg style="left:58px;top:12px" width="19" height="19"><path d="M9.5 1 V18 M1 9.5 H18" stroke="#555" stroke-width="2.6"/></svg>
<div class="a" style="left:96px;top:2px;width:250px;height:35px;background:#fff;border-radius:0 0 4px 4px"></div>
<div class="a" style="left:96px;top:34px;width:250px;height:2.5px;background:#2b6cc4;border-radius:0 0 3px 3px"></div>
<svg style="left:108px;top:6px" width="26" height="25"><path d="M1 9 L4 6.5 H8 V23.5 H4 L1 21.5 Z M1 9 H5 V23.5 M5 9 L8 6.5" stroke="#333" stroke-width="1.3" fill="#fff" stroke-linejoin="round"/><path d="M10 4 L13 1 H19 L23 4 V23.5 H13 L10 21.5 Z M10 4 H19 L23 1 M19 4 V23.5" stroke="#333" stroke-width="1.3" fill="#fff" stroke-linejoin="round"/></svg>
<div class="t" style="left:137px;top:10px;font-size:17.5px;color:#333;letter-spacing:0.1px">Power Drill</div>
<div class="a" style="left:347px;top:2px;width:251px;height:35px;background:#e8e8ea;border-radius:0 0 5px 5px;box-shadow:0 1.5px 1px rgba(0,0,0,0.13)"></div>
<svg style="left:362px;top:9px" width="23" height="20"><rect x="0.8" y="0.8" width="21" height="18" fill="#fff" stroke="#333" stroke-width="1.4"/><path d="M13 18.8 V12 H21.8" stroke="#333" stroke-width="1.4" fill="none"/></svg>
<div class="t" style="left:390px;top:10.5px;font-size:17px;color:#6b6b6b">Drawing 1</div>
<div class="a" style="left:600px;top:2px;width:249px;height:35px;background:#e8e8ea;border-radius:0 0 5px 5px;box-shadow:0 1.5px 1px rgba(0,0,0,0.13)"></div>
<svg style="left:613px;top:6px" width="26" height="25"><path d="M1 9 L4 6.5 H8 V23.5 H4 L1 21.5 Z M1 9 H5 V23.5 M5 9 L8 6.5" stroke="#333" stroke-width="1.3" fill="#fff" stroke-linejoin="round"/><path d="M10 4 L13 1 H19 L23 4 V23.5 H13 L10 21.5 Z M10 4 H19 L23 1 M19 4 V23.5" stroke="#333" stroke-width="1.3" fill="#fff" stroke-linejoin="round"/></svg>
<div class="t" style="left:643px;top:10.5px;font-size:17px;color:#6b6b6b">Motor</div>
<div class="a" style="left:853px;top:2px;width:250px;height:35px;background:#e8e8ea;border-radius:0 0 5px 5px;box-shadow:0 1.5px 1px rgba(0,0,0,0.13)"></div>
<svg style="left:866px;top:6px" width="26" height="25"><path d="M1 9 L4 6.5 H8 V23.5 H4 L1 21.5 Z M1 9 H5 V23.5 M5 9 L8 6.5" stroke="#333" stroke-width="1.3" fill="#fff" stroke-linejoin="round"/><path d="M10 4 L13 1 H19 L23 4 V23.5 H13 L10 21.5 Z M10 4 H19 L23 1 M19 4 V23.5" stroke="#333" stroke-width="1.3" fill="#fff" stroke-linejoin="round"/></svg>
<div class="t" style="left:896px;top:10.5px;font-size:17px;color:#6b6b6b">Right Casing Mold</div>

</div>
<svg style="left:1380px;top:100px" width="220" height="220" viewBox="1380 100 220 220">
<g fill="#dde3eb">
<path d="M1479 126 L1487.6 115 L1496 126 Z"/>
<path d="M1479 288 L1496 288 L1487.6 298 Z"/>
<path d="M1406 199 L1395 207.6 L1406 216 Z"/>
<path d="M1570 199 L1581 207.6 L1570 216 Z"/>
</g>
<g fill="none" stroke="#dde3eb" stroke-width="4.5">
<path d="M1461 126 Q1440 134 1428 148"/>
<path d="M1514 126 Q1535 134 1547 148"/>
</g>
<g fill="#dde3eb">
<path d="M1420 139 L1421 157 L1436 152 Z"/>
<path d="M1555 139 L1554 157 L1539 152 Z"/>
</g>
<!-- cube frame -->
<path d="M1481.7 154.9 Q1487.5 151.5 1493.3 154.9 L1530.2 176.1 Q1536.0 179.5 1536.0 186.2 L1536.0 228.8 Q1536.0 235.5 1530.2 238.9 L1493.3 260.1 Q1487.5 263.5 1481.7 260.1 L1444.8 238.9 Q1439.0 235.5 1439.0 228.8 L1439.0 186.2 Q1439.0 179.5 1444.8 176.1 Z" fill="#e1e6ee"/>
<path d="M1479.6 195.7 Q1487.5 200.2 1495.4 195.7 L1515.5 184.1 Q1523.4 179.5 1515.5 174.9 L1495.4 163.3 Q1487.5 158.8 1479.6 163.3 L1459.5 174.9 Q1451.6 179.5 1459.5 184.1 Z" fill="#fdfdfd"/>
<path d="M1481.2 220.3 Q1481.2 211.1 1473.3 206.6 L1453.2 195.0 Q1445.3 190.4 1445.3 199.5 L1445.3 222.7 Q1445.3 231.9 1453.2 236.4 L1473.3 248.0 Q1481.2 252.6 1481.2 243.5 Z" fill="#fdfdfd"/>
<path d="M1501.7 206.6 Q1493.8 211.1 1493.8 220.3 L1493.8 243.5 Q1493.8 252.6 1501.7 248.0 L1521.8 236.4 Q1529.7 231.9 1529.7 222.7 L1529.7 199.5 Q1529.7 190.4 1521.8 195.0 Z" fill="#fdfdfd"/>
<circle cx="1487.5" cy="207.5" r="7" fill="#fdfdfd"/>
<ellipse cx="1487.5" cy="257.5" rx="7" ry="3.5" fill="#fdfdfd"/>
<ellipse cx="1444.0025773880714" cy="182.5" rx="2.8" ry="6" fill="#fdfdfd" transform="rotate(30 1444.0025773880714 182.5)"/>
<ellipse cx="1530.9974226119286" cy="182.5" rx="2.8" ry="6" fill="#fdfdfd" transform="rotate(-30 1530.9974226119286 182.5)"/>
<path d="M1487.5 149.5 L1487.5 160.5" stroke="#fdfdfd" stroke-width="2.5"/>
<g font-family="Liberation Sans" font-size="11" font-style="italic" fill="#3d3d3d" stroke="#3d3d3d" stroke-width="0.25">
<text x="1478" y="181" transform="rotate(30 1487 177)">Top</text>
<text x="1449" y="225" transform="rotate(30 1462 222)">Front</text>
<text x="1501" y="229" transform="rotate(-30 1514 222)">Right</text>
</g>
<!-- axes -->
<path d="M1433.8 180 L1433.8 238" stroke="#3b5bd6" stroke-width="1.5"/>
<path d="M1433.8 238 L1485 268" stroke="#d23a3a" stroke-width="1.5"/>
<path d="M1433.8 238 L1483 210" stroke="#4caf50" stroke-width="0.9" stroke-dasharray="3 2"/><path d="M1490 205 L1492 199 M1490 205 L1488 211 M1490 205 L1495 201" stroke="#6ab0d8" stroke-width="0.8"/>
<text x="1428" y="176" font-family="Liberation Sans" font-size="13" font-weight="bold" fill="#3b5bd6">Z</text>
<text x="1489" y="280" font-family="Liberation Sans" font-size="13" font-weight="bold" fill="#d23a3a">X</text>
<!-- small view cube icon -->
<path d="M1543.5 279 L1554 284 L1554 296 L1543.5 301 L1533 296 L1533 284 Z" fill="#d6d6d6" stroke="#444" stroke-width="1.2" stroke-linejoin="round"/>
<path d="M1533 284 L1543.5 289 L1554 284 M1543.5 289 V301" stroke="#888" stroke-width="0.8" fill="none"/>
<path d="M1533.5 284.5 L1543.5 289.5 L1543.5 300.5 L1533.5 295.5 Z" fill="#f5f5f5"/>
<path d="M1566 287 H1575 L1570.5 292 Z" fill="#333"/>
</svg>
<div class="a" style="left:1560px;top:436px;width:44px;height:42px;border:1px solid #d4d4d4;border-radius:3px;background:#fcfcfb"></div>
<svg style="left:1566px;top:443px" width="30" height="28">
<rect x="2" y="1" width="13" height="11" fill="#2a6cc0"/>
<g fill="#9cc3ef"><rect x="3" y="2" width="3" height="2.5"/><rect x="7" y="2" width="3" height="2.5"/><rect x="11" y="2" width="3" height="2.5"/><rect x="3" y="5.5" width="3" height="2.5"/><rect x="7" y="5.5" width="3" height="2.5"/><rect x="11" y="5.5" width="3" height="2.5"/></g>
<path d="M17 5 L26 9.5 V19 L17 23.5 L8 19 V12" fill="none" stroke="#333" stroke-width="1.3" stroke-linejoin="round"/>
<path d="M8 12 L17 16 L26 9.5 M17 16 V23.5" fill="none" stroke="#333" stroke-width="1.3"/>
</svg>
<svg style="left:0;top:894px" width="6" height="6"><path d="M0 0 Q0.5 5.5 6 6 L0 6 Z" fill="#0d1a2a"/></svg>
<svg style="left:1594px;top:894px" width="6" height="6"><path d="M6 0 Q5.5 5.5 0 6 L6 6 Z" fill="#0d1a2a"/></svg>

</body></html>
